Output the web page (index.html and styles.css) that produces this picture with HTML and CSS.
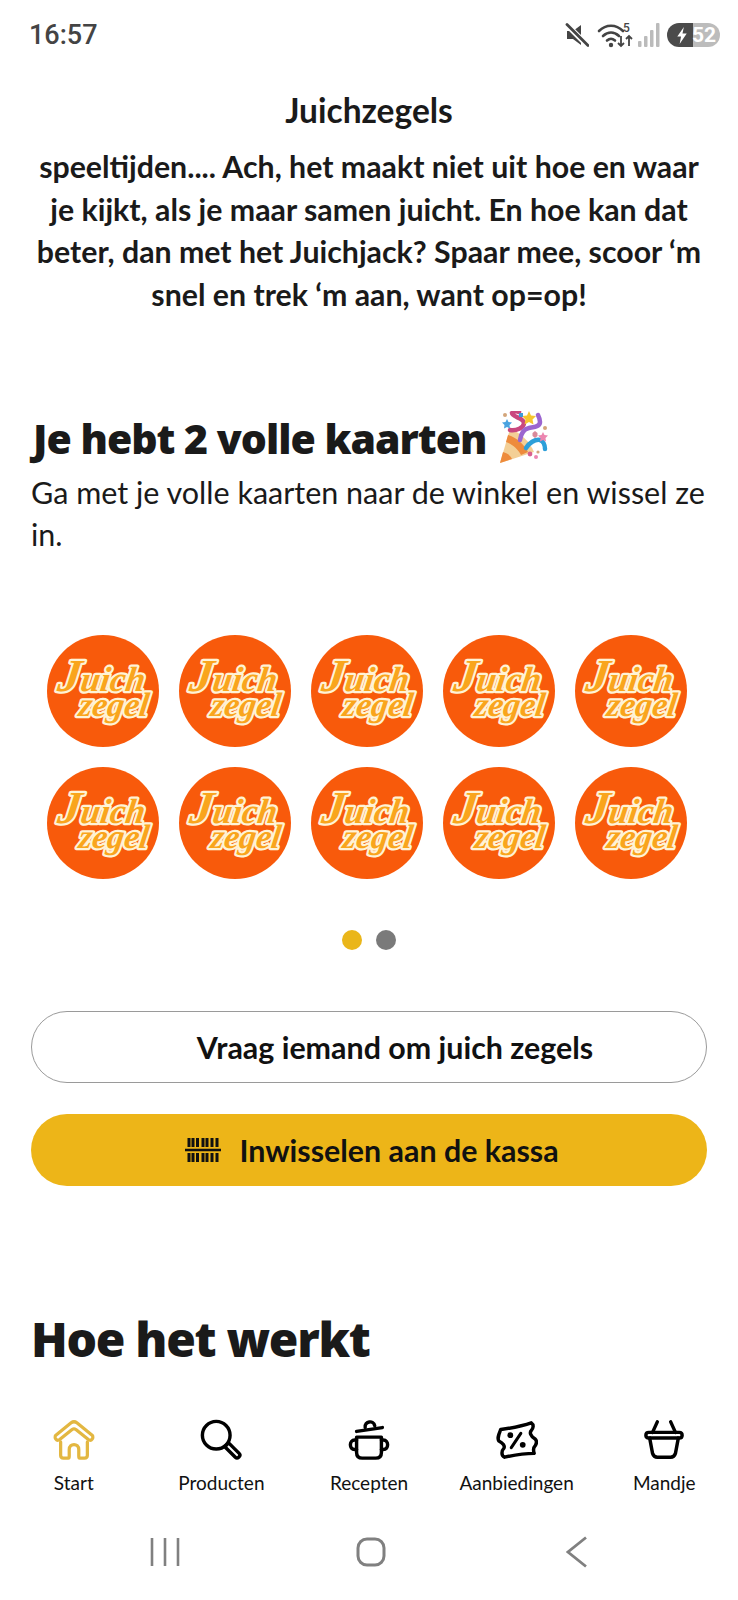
FILE: index.html
```html
<!doctype html>
<html lang="nl">
	<head>
		<meta name="viewport" content="width=device-width,initial-scale=1" />
		<title>Juichzegels</title>
		<link rel="stylesheet" href="styles.css">
	</head>
	<body>
		<div class="phone">
			<header class="status">
				<span class="status-time">16:57</span>
				<div class="status-icons">
					<svg class="ic-mute" viewBox="0 0 24 24"><path d="M2 8h6l8-6v20l-8-6H2z" fill="#444"/><path d="M2 2l21 21" stroke="#fff" stroke-width="5.500"/><path d="M2 1.500l21 21" stroke="#444" stroke-width="2.800" stroke-linecap="round"/></svg>
					<svg class="ic-wifi" viewBox="0 0 36 26"><g fill="none" stroke="#444" stroke-width="2.600" stroke-linecap="round"><path d="M2 9c7-7 17-7 24 0"/><path d="M6 14c5-4.500 11-4.500 16 0"/><path d="M10 18.500c3-2.500 5-2.500 8 0"/></g><circle cx="14" cy="23" r="2.200" fill="#444"/><text x="26" y="10" class="ic-wifi-num">5</text><path d="M24 14v10m-3-3l3 3 3-3M32 24V14m-3 3l3-3 3 3" fill="none" stroke="#444" stroke-width="1.800"/></svg>
					<svg class="ic-signal" viewBox="0 0 22 24"><g fill="#bbb"><rect x="0" y="18" width="3.500" height="6" rx="1"/><rect x="6" y="13" width="3.500" height="11" rx="1"/><rect x="12" y="7" width="3.500" height="17" rx="1"/><rect x="18" y="0" width="3.500" height="24" rx="1"/></g></svg>
					<div class="battery">
						<svg class="battery-bolt" viewBox="0 0 12 18"><path d="M8 0L1 10h4l-1.500 8L11 7H6.500z" fill="#fff"/></svg>
						<span class="battery-num">52</span>
					</div>
				</div>
			</header>

			<main class="content">
				<h1 class="title">Juichzegels</h1>
				<p class="intro">speeltijden.... Ach, het maakt niet uit hoe en waar je kijkt, als je maar samen juicht. En hoe kan dat beter, dan met het Juichjack? Spaar mee, scoor ‘m snel en trek ‘m aan, want op=op!</p>

				<section class="cards">
					<h2 class="cards-title">Je hebt 2 volle kaarten
						<svg class="popper" viewBox="0 0 52 54">
							<path d="M2 52L12 18c10 3 20 13 24 23z" fill="#f3cf96"/>
							<path d="M2 52l3-11c4 1 7 3 9 7zM8 31l2-7c8 2 16 9 20 17l-7 3c-3-6-9-11-15-13z" fill="#ee8b3c"/>
							<path d="M12 19c6 1 14-2 14-7s-12-6-12-10c2-2 5-2 7-1" fill="none" stroke="#c9487f" stroke-width="4.500" stroke-linecap="round"/>
							<path d="M22 29c1-7 4-11 9-12s11-1 11-6c0-3-1-5-2-7" fill="none" stroke="#9b65cf" stroke-width="4.500" stroke-linecap="round"/>
							<path d="M28 37c3-5 9-9 14-8 3 1 5 5 5 9" fill="none" stroke="#2d9fd9" stroke-width="4.500" stroke-linecap="round"/>
							<path d="M31 0l2 4.500 5 .5-3.500 3.500 1 5-4.500-2.500-4.500 2.500 1-5L24 5l5-.5z" fill="#f6c52f"/>
							<path d="M9 8l1.500 3 3.500.5-2.500 2.500.5 3.500-3-1.500-3 1.500.5-3.500L4 11.500l3.500-.5z" fill="#4aa3e0"/>
							<circle cx="7" cy="4" r="2" fill="#d3a57a"/>
							<rect x="21" y="2" width="4" height="4" fill="#3d9ad8"/>
							<path d="M45 21l1.500 3 3.500.5-2.500 2.500.5 3.500-3-1.500-3 1.500.5-3.500-2.500-2.500 3.500-.5z" fill="#ec86b0"/>
							<path d="M37 20l2.500 2 0 3-2.500 2-2.500-2 0-3z" fill="#d98a9a"/>
							<circle cx="47" cy="17" r="2" fill="#d3a57a"/>
							<circle cx="32" cy="43" r="2.400" fill="#d9608e"/>
							<circle cx="38" cy="46" r="2" fill="#ec86b0"/>
							<circle cx="40" cy="41" r="1.600" fill="#d3a57a"/>
						</svg>
					</h2>
					<p class="cards-sub">Ga met je volle kaarten naar de winkel en wissel ze in.</p>

					<div class="stickers">
						<svg class="sticker" viewBox="0 0 112 112"><circle cx="56" cy="56" r="56"/><text><tspan class="l1" x="54" y="56"><tspan class="cap">J</tspan>uich</tspan><tspan class="l2" x="70" y="81">zegel</tspan></text></svg>
						<svg class="sticker" viewBox="0 0 112 112"><circle cx="56" cy="56" r="56"/><text><tspan class="l1" x="54" y="56"><tspan class="cap">J</tspan>uich</tspan><tspan class="l2" x="70" y="81">zegel</tspan></text></svg>
						<svg class="sticker" viewBox="0 0 112 112"><circle cx="56" cy="56" r="56"/><text><tspan class="l1" x="54" y="56"><tspan class="cap">J</tspan>uich</tspan><tspan class="l2" x="70" y="81">zegel</tspan></text></svg>
						<svg class="sticker" viewBox="0 0 112 112"><circle cx="56" cy="56" r="56"/><text><tspan class="l1" x="54" y="56"><tspan class="cap">J</tspan>uich</tspan><tspan class="l2" x="70" y="81">zegel</tspan></text></svg>
						<svg class="sticker" viewBox="0 0 112 112"><circle cx="56" cy="56" r="56"/><text><tspan class="l1" x="54" y="56"><tspan class="cap">J</tspan>uich</tspan><tspan class="l2" x="70" y="81">zegel</tspan></text></svg>
						<svg class="sticker" viewBox="0 0 112 112"><circle cx="56" cy="56" r="56"/><text><tspan class="l1" x="54" y="56"><tspan class="cap">J</tspan>uich</tspan><tspan class="l2" x="70" y="81">zegel</tspan></text></svg>
						<svg class="sticker" viewBox="0 0 112 112"><circle cx="56" cy="56" r="56"/><text><tspan class="l1" x="54" y="56"><tspan class="cap">J</tspan>uich</tspan><tspan class="l2" x="70" y="81">zegel</tspan></text></svg>
						<svg class="sticker" viewBox="0 0 112 112"><circle cx="56" cy="56" r="56"/><text><tspan class="l1" x="54" y="56"><tspan class="cap">J</tspan>uich</tspan><tspan class="l2" x="70" y="81">zegel</tspan></text></svg>
						<svg class="sticker" viewBox="0 0 112 112"><circle cx="56" cy="56" r="56"/><text><tspan class="l1" x="54" y="56"><tspan class="cap">J</tspan>uich</tspan><tspan class="l2" x="70" y="81">zegel</tspan></text></svg>
						<svg class="sticker" viewBox="0 0 112 112"><circle cx="56" cy="56" r="56"/><text><tspan class="l1" x="54" y="56"><tspan class="cap">J</tspan>uich</tspan><tspan class="l2" x="70" y="81">zegel</tspan></text></svg>
					</div>

					<div class="dots">
						<span class="dot dot-on"></span>
						<span class="dot"></span>
					</div>

					<button class="btn btn-outline" type="button">Vraag iemand om juich zegels</button>
					<button class="btn btn-yellow" type="button">
						<svg class="ic-barcode" viewBox="0 0 36 28"><path d="M0 14h36" stroke="#111" stroke-width="2.500"/><path d="M4 2v9M4 17v9M8 2v9M8 17v9M12.500 2v9M12.500 17v9M18 2v9M18 17v9M22 2v9M22 17v9M27 2v9M27 17v9M32 2v9M32 17v9" stroke="#111" stroke-width="3"/></svg>
						Inwisselen aan de kassa
					</button>
				</section>

				<h2 class="how">Hoe het werkt</h2>
			</main>

			<nav class="tabs">
				<a class="tab tab-on">
					<svg viewBox="0 0 44 44"><g fill="none" stroke="#e3b741" stroke-width="3.400" stroke-linecap="round" stroke-linejoin="round"><path d="M3 21c-1-1-1-3 0-4L19 4c2-1.500 4-1.500 6 0l16 13c1 1 1 3 0 4-1 1.500-2.500 1.500-4 .5L24 11c-1.500-1-2.500-1-4 0L7 21.500c-1.500 1-3 1-4-.5z"/><path d="M8 24v14c0 2 1 3 3 3h5c1 0 1-1 1-2v-7c0-7 10-7 10 0v7c0 1 0 2 1 2h5c2 0 3-1 3-3V24"/></g></svg>
					<span>Start</span>
				</a>
				<a class="tab">
					<svg viewBox="0 0 44 44"><g fill="none" stroke="#000" stroke-width="3.600" stroke-linecap="round" stroke-linejoin="round"><circle cx="17" cy="17" r="14.500"/><path d="M26 29l4-4 11 11c1 1 1 2.500 0 3.500l-.5.5c-1 1-2.500 1-3.500 0z"/></g></svg>
					<span>Producten</span>
				</a>
				<a class="tab">
					<svg viewBox="0 0 44 44"><g fill="none" stroke="#000" stroke-width="3.600" stroke-linecap="round" stroke-linejoin="round"><path d="M9 13l27-4"/><path d="M18 9c-1-7 9-8 10-2"/><path d="M9 19h26v16c0 4-2 6-6 6H15c-4 0-6-2-6-6z"/><path d="M9 22H7c-6 0-6 10 0 10h2M35 22h2c6 0 6 10 0 10h-2"/></g></svg>
					<span>Recepten</span>
				</a>
				<a class="tab">
					<svg viewBox="0 0 44 44"><path d="M5 11C12 10 26 8 37 4c3 2 2 6 0 8-2 2-1 6 4 9 2 2 2 4 0 7-2 2-2 5-1 8-12 0-22 2-31 4-4-2-3-7-1-9 2-3-1-6-5-8-2-3 0-7 2-12z" fill="none" stroke="#000" stroke-width="3.600" stroke-linejoin="round"/><path d="M16 30l10-15" stroke="#000" stroke-width="3.200" stroke-linecap="round"/><circle cx="15" cy="17" r="3"/><circle cx="28" cy="27" r="3"/></svg>
					<span>Aanbiedingen</span>
				</a>
				<a class="tab">
					<svg viewBox="0 0 44 44"><g fill="none" stroke="#000" stroke-width="3.600" stroke-linecap="round" stroke-linejoin="round"><path d="M15 3l-5 11M29 3l5 11"/><path d="M3 17c0-2 1-3 3-3h32c2 0 3 1 3 3s-1 3-3 3H6c-2 0-3-1-3-3z"/><path d="M7 20l3 16c1 3 2 4 5 4h14c3 0 4-1 5-4l3-16"/></g></svg>
					<span>Mandje</span>
				</a>
			</nav>

			<footer class="sysnav">
				<svg class="sys-menu" viewBox="0 0 30 30"><path d="M2 1v28M15 1v28M28 1v28" stroke="#808080" stroke-width="2.600"/></svg>
				<svg class="sys-home" viewBox="0 0 30 30"><rect x="2" y="2" width="26" height="26" rx="9" fill="none" stroke="#808080" stroke-width="3"/></svg>
				<svg class="sys-back" viewBox="0 0 22 32"><path d="M20 1.500L2 16l18 14.500" fill="none" stroke="#808080" stroke-width="2.800"/></svg>
			</footer>
		</div>
	</body>
</html>
```

FILE: styles.css
```css
* {
	box-sizing: border-box;
}

html,
body {
	margin: 0;
	padding: 0;
	background: #fff;
}

body {
	font-family: "Lato", "Open Sans", sans-serif;
	color: #1a1a1a;
}

.phone {
	display: flex;
	flex-direction: column;
	width: 738px;
	height: 1600px;
	overflow: hidden;
}

/* status bar */
.status {
	display: flex;
	justify-content: space-between;
	align-items: center;
	height: 70px;
	padding: 0 18px 0 29px;
}

.status-time {
	font-family: "Roboto", sans-serif;
	font-size: 27px;
	font-weight: 500;
	color: #444;
}

.status-icons {
	display: flex;
	align-items: center;
	gap: 7px;
}

.ic-mute {
	width: 24px;
	height: 24px;
	margin-right: 1px;
}

.ic-wifi {
	width: 36px;
	height: 26px;
	margin-right: -2px;
}

.ic-wifi-num {
	font-family: "Roboto", sans-serif;
	font-size: 12px;
	font-weight: 500;
	fill: #444;
}

.ic-signal {
	width: 22px;
	height: 24px;
}

.battery {
	display: flex;
	align-items: center;
	width: 53px;
	height: 24px;
	padding-left: 9px;
	border-radius: 12px;
	background: linear-gradient(90deg, #4b4b4b 0 50%, #bcbcbc 50% 100%);
}

.battery-bolt {
	width: 12px;
	height: 17px;
}

.battery-num {
	margin-left: 4px;
	font-family: "Roboto", sans-serif;
	font-size: 21px;
	font-weight: 700;
	color: #fff;
}

/* page content */
.content {
	flex: 1;
	padding: 0 31px;
}

.title {
	margin: 20px 0 0;
	font-size: 33.500px;
	font-weight: 700;
	line-height: 40px;
	text-align: center;
}

.intro {
	margin: 15px -4px 0;
	font-size: 30.300px;
	font-weight: 700;
	line-height: 42.700px;
	text-align: center;
}

.cards {
	display: flex;
	flex-direction: column;
	margin-top: 94px;
}

.cards-title {
	display: flex;
	align-items: center;
	gap: 12px;
	margin: 0 0 0 2px;
	font-family: "Noto Sans", sans-serif;
	font-size: 41px;
	font-weight: 900;
	letter-spacing: -1px;
	line-height: 56px;
}

.popper {
	width: 52px;
	height: 54px;
}

.cards-sub {
	margin: 5px 0 0;
	font-size: 30.500px;
	line-height: 42px;
}

.stickers {
	display: grid;
	grid-template-columns: repeat(5, 112px);
	gap: 20px;
	margin: 80px 0 0 16px;
}

.sticker {
	display: block;
	width: 112px;
	height: 112px;
}

.sticker circle {
	fill: #f85a0b;
}

.sticker text {
	font-family: "Liberation Serif", serif;
	font-style: italic;
	font-weight: 700;
	text-anchor: middle;
	fill: #f9a51c;
	stroke: #fff3d6;
	stroke-width: 4.500px;
	stroke-linejoin: round;
	paint-order: stroke;
	transform: translateX(7px) skewX(-8deg);
}

.sticker .l1 {
	font-size: 35px;
}

.sticker .cap {
	font-size: 46px;
}

.sticker .l2 {
	font-size: 34px;
}

.dots {
	display: flex;
	justify-content: center;
	gap: 14px;
	margin: 51px 0 0;
}

.dot {
	width: 20px;
	height: 20px;
	border-radius: 50%;
	background: #7a7a7a;
}

.dot-on {
	background: #eab61a;
}

.btn {
	display: flex;
	justify-content: center;
	align-items: center;
	gap: 18px;
	width: 100%;
	height: 72px;
	border-radius: 36px;
	font-family: inherit;
	font-size: 30.400px;
	font-weight: 700;
	color: #111;
}

.btn-outline {
	margin-top: 61px;
	padding-left: 58px;
	border: 1.500px solid #9a9a9a;
	background: #fff;
}

.btn-yellow {
	margin-top: 31px;
	padding-left: 12px;
	border: 0;
	background: #edb518;
}

.ic-barcode {
	width: 36px;
	height: 28px;
}

.how {
	margin: 121px 0 0;
	font-family: "Noto Sans", sans-serif;
	font-size: 48px;
	font-weight: 900;
	letter-spacing: -1.300px;
	line-height: 64px;
}

/* bottom tabs */
.tabs {
	display: grid;
	grid-template-columns: repeat(5, 1fr);
	height: 121px;
}

.tab {
	display: flex;
	flex-direction: column;
	align-items: center;
	gap: 10px;
	font-size: 19px;
	line-height: 24px;
	color: #111;
}

.tab svg {
	width: 42px;
	height: 42px;
}

/* android nav */
.sysnav {
	display: flex;
	justify-content: space-between;
	align-items: center;
	height: 60px;
	padding: 0 150px 36px 150px;
}

.sys-menu {
	width: 30px;
	height: 30px;
}

.sys-home {
	width: 30px;
	height: 30px;
	margin-left: -4px;
}

.sys-back {
	width: 22px;
	height: 32px;
}
```
